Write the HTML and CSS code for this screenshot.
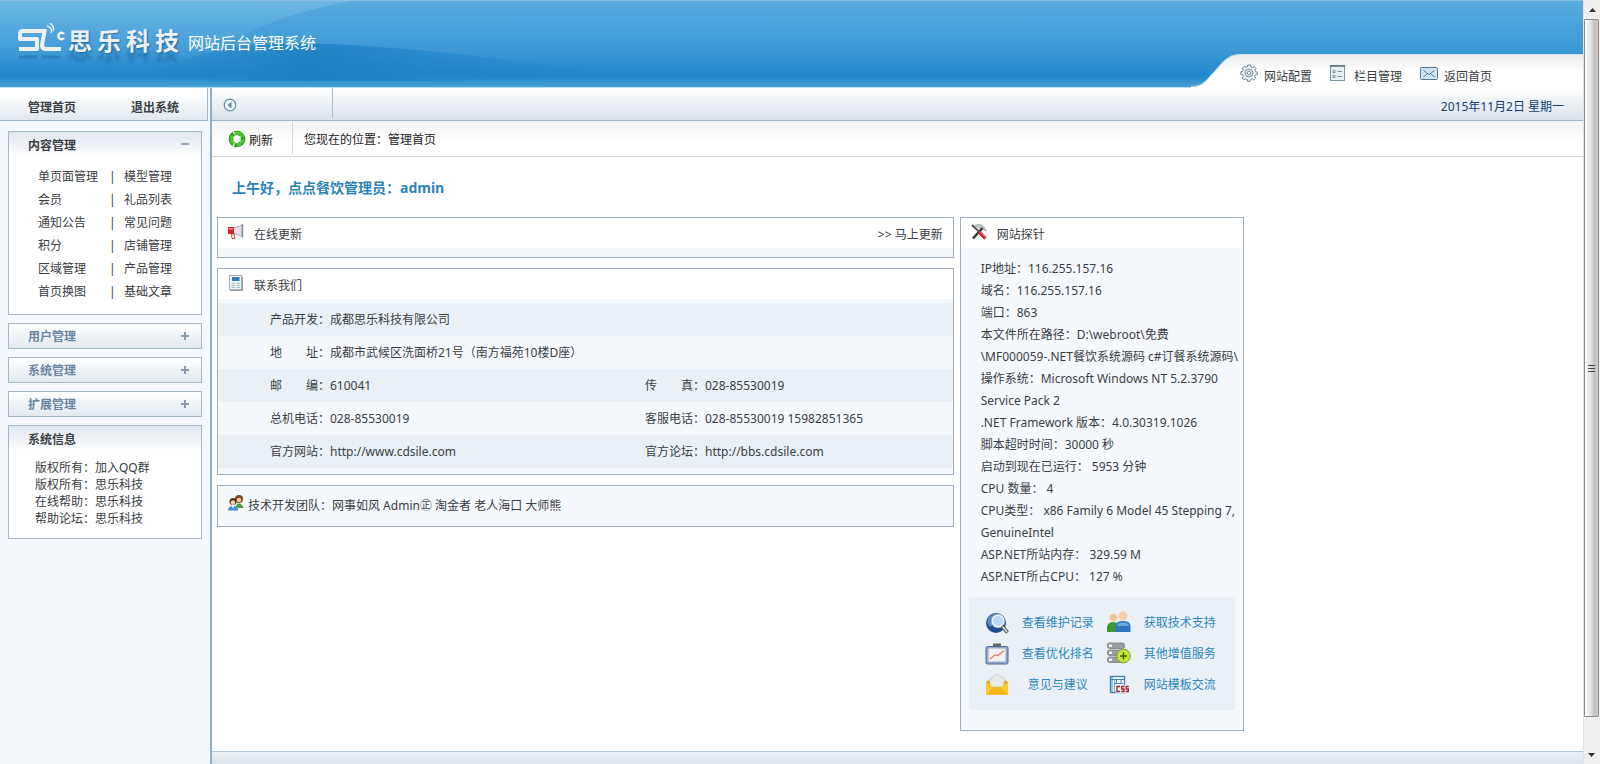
FILE: index.html
```html
<!DOCTYPE html>
<html lang="zh-CN">
<head>
<meta charset="utf-8">
<title>网站后台管理系统</title>
<link rel="stylesheet" href="styles.css">
</head>
<body>
<div class="window">
<div class="app">
  <header class="header">
    <svg class="swoosh" width="700" height="86" viewBox="0 0 700 86" aria-hidden="true">
      <defs>
        <linearGradient id="sw1" x1="0" y1="0" x2="0" y2="1"><stop offset="0" stop-color="#7cc0e8" stop-opacity=".6"/><stop offset=".7" stop-color="#5fb0e0" stop-opacity="0"/></linearGradient>
        <linearGradient id="sw2" x1="0" y1="0" x2="1" y2="0"><stop offset="0" stop-color="#1a80c4" stop-opacity="0"/><stop offset=".35" stop-color="#1a80c4" stop-opacity=".85"/><stop offset="1" stop-color="#1f86c8" stop-opacity="0"/></linearGradient>
      </defs>
      <path d="M0 0H350Q285 12 235 38Q170 75 120 86H0Z" fill="url(#sw1)"/>
      <path d="M130 80Q210 42 290 42Q420 43 640 78V80H130Z" fill="url(#sw2)"/>
    </svg>
    <div class="brand">
      <svg width="50" height="42" viewBox="0 0 50 42" aria-hidden="true">
        <path d="M2 34H20M25 34H43" stroke="#1b5f96" stroke-opacity=".35" stroke-width="3"/>
        <g fill="none" stroke="#eef1f4" stroke-width="4"><path d="M27 8H6Q3 8 3 11V16H20V26H2" stroke-linejoin="round"/><path d="M28 6L25 22Q25 26 29 26H44"/></g>
        <path d="M30 3Q36 5 34 10M33 0Q38 4 36 8" fill="none" stroke="#e6edf3" stroke-width="1.500"/>
        <path d="M47 11A3.200 3.200 0 1 0 47 15" fill="none" stroke="#eef1f4" stroke-width="2.500"/>
      </svg>
      <div class="brand-name"><span>思</span><span>乐</span><span>科</span><span>技</span></div>
      <div class="brand-sub">网站后台管理系统</div>
    </div>
    <div class="tab">
      <svg class="tab-edge" width="48" height="34" viewBox="0 0 48 34" aria-hidden="true">
        <defs><linearGradient id="te" x1="0" y1="0" x2="0" y2="1"><stop offset="0" stop-color="#ececec"/><stop offset=".5" stop-color="#fff"/></linearGradient></defs>
        <path d="M0 34V33Q9 33 15 27L33 7Q40 0 48 0V34Z" fill="url(#te)"/>
        <path d="M0 32.500Q9 32.500 15 26.500L33 6.500Q40 .5 48 .5" fill="none" stroke="#a9d0ea"/>
      </svg>
      <nav class="tab-links">
        <a href="#"><svg width="18" height="18" viewBox="0 0 18 18"><path d="M7.600 1H10.400L10.900 3L12.500 3.700L14.300 2.600L16 4.600L14.900 6.200L15.400 7.700L17.300 8.100V10.500L15.300 11L14.600 12.500L15.600 14.200L13.700 16L12.100 14.900L10.600 15.500L10.100 17.300H7.700L7.300 15.500L5.700 14.800L4 15.800L2.200 13.900L3.300 12.200L2.700 10.700L.8 10.200V7.800L2.700 7.300L3.400 5.700L2.400 4L4.200 2.400L5.900 3.400L7.200 2.900Z" fill="#eef3f5" stroke="#6f8892"/><circle cx="9" cy="9" r="4" fill="#dfe8ec" stroke="#7f969f"/><circle cx="9" cy="9" r="1.800" fill="#fff" stroke="#7f969f"/></svg>网站配置</a>
        <a href="#"><svg width="18" height="18" viewBox="0 0 18 18"><rect x=".5" y="1.500" width="14" height="15" fill="#e6eff1" stroke="#7f98a0"/><path d="M0 2H15" stroke="#5b7a84" stroke-width="1.600"/><path d="M3 6.500H5V8.500H3ZM3 11.500H5V13.500H3Z" fill="#fff" stroke="#7b959d"/><path d="M7.500 7.500H12M7.500 12.500H12" stroke="#7b959d"/></svg>栏目管理</a>
        <a href="#"><svg width="18" height="18" viewBox="0 0 18 18"><rect x=".5" y="3.500" width="17" height="12" rx="1" fill="#cfe4f2" stroke="#55788c"/><path d="M3.500 6.500L9 10.500L14.500 6.500M3.500 13L7 10M14.500 13L11 10" fill="none" stroke="#55788c"/></svg>返回首页</a>
      </nav>
    </div>
  </header>

  <div class="body">
    <aside class="side">
      <nav class="side-nav"><a href="#">管理首页</a><a href="#">退出系统</a></nav>
      <div class="side-boxes">
        <section class="box">
          <button class="box-head" type="button">内容管理<span class="minus"></span></button>
          <ul class="menu">
            <li><a href="#">单页面管理</a><i>|</i><a href="#">模型管理</a></li>
            <li><a href="#">会员</a><i>|</i><a href="#">礼品列表</a></li>
            <li><a href="#">通知公告</a><i>|</i><a href="#">常见问题</a></li>
            <li><a href="#">积分</a><i>|</i><a href="#">店铺管理</a></li>
            <li><a href="#">区域管理</a><i>|</i><a href="#">产品管理</a></li>
            <li><a href="#">首页换图</a><i>|</i><a href="#">基础文章</a></li>
          </ul>
        </section>
        <button class="box closed" type="button">用户管理<span class="plus"></span></button>
        <button class="box closed" type="button">系统管理<span class="plus"></span></button>
        <button class="box closed" type="button">扩展管理<span class="plus"></span></button>
        <section class="box">
          <h2 class="box-head">系统信息</h2>
          <ul class="info">
            <li>版权所有：加入QQ群</li><li>版权所有：思乐科技</li><li>在线帮助：思乐科技</li><li>帮助论坛：思乐科技</li>
          </ul>
        </section>
      </div>
    </aside>

    <main class="main">
      <div class="bar">
        <div class="bar-cell"><button type="button" class="plain" aria-label="收起"><svg width="14" height="14" viewBox="0 0 14 14"><circle cx="7" cy="7" r="5.800" fill="#f2f7fa" stroke="#5f8aa3" stroke-width="1.200"/><path d="M8.500 3.500V10.500L4.500 7Z" fill="#5f8aa3"/></svg></button></div>
        <time>2015年11月2日 星期一</time>
      </div>
      <div class="crumbs">
        <button type="button" class="plain refresh"><svg width="18" height="18" viewBox="0 0 18 18"><circle cx="9" cy="9" r="6" fill="none" stroke="#279a12" stroke-width="4.600" stroke-dasharray="11.600 1"/><circle cx="9" cy="9" r="6" fill="none" stroke="#4cc62e" stroke-width="3" stroke-dasharray="9.600 3"/><path d="M9 4.500L10.300 7.300L13.300 6.600L11.600 9.200L13.300 11.800L10.300 11.200L9 14L7.700 11.200L4.700 11.800L6.400 9.200L4.700 6.600L7.700 7.300Z" fill="#f4fff0"/></svg><span>刷新</span></button>
        <div class="where">您现在的位置：管理首页</div>
      </div>
      <div class="content">
        <h1 class="hello">上午好，点点餐饮管理员：admin</h1>
        <div class="cols">
          <div class="left">
            <section class="panel update">
              <h2 class="panel-head"><svg width="16" height="16" viewBox="0 0 16 16"><path d="M5 4.500L14 1V12.500L5 9Z" fill="#dfe3e6" stroke="#a5abb0"/><path d="M14.500 0V13.500" stroke="#8b9298" stroke-width="1.500"/><path d="M0 3H6V10H0Z" fill="#cf2630"/><path d="M1 4H5V5.500H1Z" fill="#f08a88"/><path d="M3 10H6L7 14.500H4Z" fill="#f3dede" stroke="#c55"/></svg>在线更新<a class="more" href="#">&gt;&gt; 马上更新</a></h2>
            </section>
            <section class="panel contact">
              <h2 class="panel-head"><svg width="16" height="16" viewBox="0 0 16 16"><rect x="1.500" y=".5" width="12" height="14" fill="#eef3f7" stroke="#9fb0bc"/><path d="M2 15.500H15M14.500 2V15" stroke="#9a9a9a"/><rect x="4" y="2" width="7.500" height="4" fill="#2f80b5"/><path d="M3.500 8.500H7M8.500 8.500H12M3.500 10.500H7M8.500 10.500H12M3.500 12.500H7M8.500 12.500H12" stroke="#a9b8c2"/></svg>联系我们</h2>
              <table>
                <tr><td>产品开发：成都思乐科技有限公司</td><td></td></tr>
                <tr><td>地　　址：成都市武候区洗面桥21号（南方福苑10楼D座）</td><td></td></tr>
                <tr><td>邮　　编：610041</td><td>传　　真：028-85530019</td></tr>
                <tr><td>总机电话：028-85530019</td><td>客服电话：028-85530019 15982851365</td></tr>
                <tr><td>官方网站：http://www.cdsile.com</td><td>官方论坛：http://bbs.cdsile.com</td></tr>
              </table>
            </section>
            <section class="panel team">
              <svg width="16" height="16" viewBox="0 0 16 16"><circle cx="11" cy="4" r="4" fill="#7c4a1c"/><circle cx="11" cy="5" r="2.300" fill="#f5c79a"/><path d="M7.500 13Q8 8.500 11 8.500T15.500 13Z" fill="#4c9a35"/><circle cx="5" cy="6.500" r="3.500" fill="#4b2c18"/><circle cx="5" cy="7.600" r="2.300" fill="#f7cf9f"/><path d="M0 15.500Q0 11 5 11T10 15.500Z" fill="#3f8fd2"/><path d="M4 11H6L5 14Z" fill="#fff"/></svg><span>技术开发团队：网事如风 Admin㊣ 淘金者 老人海口 大师熊</span>
            </section>
          </div>
          <section class="panel probe">
            <h2 class="panel-head"><svg width="16" height="16" viewBox="0 0 16 16"><path d="M4 1.500Q10-1 13 3L15.500 7L13 6L11 3.500L8.500 4Z" fill="#c5cdcb" stroke="#8c9894" stroke-width=".7"/><path d="M11.500 4L2 14.500" stroke="#34393c" stroke-width="2.600"/><path d="M1 1L9 8.500" stroke="#4c5558" stroke-width="2"/><path d="M8 8L14.500 14.500" stroke="#d2252f" stroke-width="3.200"/><path d="M9 8L14.500 13.500" stroke="#f07f80" stroke-width=".8"/></svg>网站探针</h2>
            <ul class="facts">
              <li>IP地址：116.255.157.16</li><li>域名：116.255.157.16</li><li>端口：863</li>
              <li>本文件所在路径：D:\webroot\免费<br>\MF000059-.NET餐饮系统源码 c#订餐系统源码\</li>
              <li>操作系统：Microsoft Windows NT 5.2.3790<br>Service Pack 2</li>
              <li>.NET Framework 版本：4.0.30319.1026</li><li>脚本超时时间：30000 秒</li><li>启动到现在已运行： 5953 分钟</li><li>CPU 数量： 4</li>
              <li>CPU类型： x86 Family 6 Model 45 Stepping 7,<br>GenuineIntel</li>
              <li>ASP.NET所站内存： 329.59 M</li><li>ASP.NET所占CPU： 127 %</li>
            </ul>
            <div class="links">
              <svg width="24" height="24" viewBox="0 0 24 24"><circle cx="11" cy="12" r="10" fill="#1f4f8f"/><path d="M3 7Q8 1 15 3Q13 7 9 9Q9 14 5 16Q1 12 3 7Z" fill="#4f8fd0"/><circle cx="13" cy="10" r="6" fill="#b9d9f2" stroke="#eef3f7" stroke-width="2"/><circle cx="13" cy="10" r="7" fill="none" stroke="#6f7f8d" stroke-width=".7"/><path d="M17 15L22.500 21.500" stroke="#555" stroke-width="3.500"/><path d="M17.500 15.500L22 21" stroke="#e6e6e6" stroke-width="1.400"/></svg>
              <a href="#">查看维护记录</a>
              <svg width="24" height="24" viewBox="0 0 24 24"><circle cx="6.500" cy="6.500" r="3.800" fill="#f2c49a"/><path d="M0 21V16Q1 11 6.500 11Q10 11 11 14V21Z" fill="#3a9b35"/><circle cx="16" cy="5" r="4.500" fill="#f6cda8"/><path d="M8.500 21V15Q9 10 16 10T23.500 15V21Z" fill="#2f76c0"/><path d="M10 15Q11 11.500 16 11.500T22 15Z" fill="#6faae0"/></svg>
              <a href="#">获取技术支持</a>
              <svg width="24" height="24" viewBox="0 0 24 24"><path d="M8 1.500H16V5H8Z" fill="#666"/><rect x="1" y="4.500" width="22" height="17.500" rx="1.500" fill="#8fa9cc" stroke="#52678c"/><rect x="3.500" y="6.500" width="17" height="13" fill="#f4f1f2"/><path d="M5 17L10 13L13 13.500L19 8.500" fill="none" stroke="#e27e68" stroke-width="1.200"/></svg>
              <a href="#">查看优化排名</a>
              <svg width="24" height="24" viewBox="0 0 24 24"><g fill="#9a9da0" stroke="#7d8083" stroke-width=".8"><rect x=".5" y="1" width="17" height="5.500" rx="2"/><rect x=".5" y="8" width="17" height="5.500" rx="2"/><rect x=".5" y="15" width="17" height="5.500" rx="2"/></g><path d="M2 2.500H5V5H2ZM2 9.500H5V12H2ZM2 16.500H5V19H2Z" fill="#eee"/><circle cx="16.500" cy="14" r="6.800" fill="#c4e43a" stroke="#7fa01c"/><path d="M16.500 10.500V17.500M13 14H20" stroke="#3d5a08" stroke-width="1.400"/></svg>
              <a href="#">其他增值服务</a>
              <svg width="24" height="24" viewBox="0 0 24 24"><path d="M1 9L11.500 2L23 9V21Q23 22 22 22H2Q1 22 1 21Z" fill="#e6a013"/><path d="M4 7L12 1L20 6L18 14H6Z" fill="#e7ebe7" stroke="#bcc3bd" stroke-width=".7"/><path d="M1 9L9 14.500H15L23 9V21Q23 22 22 22H2Q1 22 1 21Z" fill="#fac92f"/><path d="M1.500 21.500L9 14.500H15L22.500 21.500" fill="#f6b51c"/></svg>
              <a href="#">意见与建议</a>
              <svg width="24" height="24" viewBox="0 0 24 24"><rect x="3.500" y="3.500" width="14" height="16" fill="#fff" stroke="#3784b5" stroke-width="1.400"/><path d="M5 4V19M7.500 7V19" stroke="#7db4d8" stroke-width="1.500"/><path d="M3 6.500H18M9.500 10V6.500M14 10V6.500M7 10.500H16" stroke="#3784b5"/><rect x="9" y="12" width="13" height="8" fill="#f3eef0"/><path d="M13 13.500H10V18.500H13M17.500 13.500H14.800V16H17V18.500H14.300M21.800 13.500H19.200V16H21.300V18.500H18.700" fill="none" stroke="#9c1f2c" stroke-width="1.300"/></svg>
              <a href="#">网站模板交流</a>
            </div>
          </section>
        </div>
      </div>
      <footer class="foot"></footer>
    </main>
  </div>
</div>
<div class="scroll" aria-hidden="true">
  <svg width="16" height="19" viewBox="0 0 16 19"><path d="M5 12L8.500 8L12 12Z" fill="#333"/></svg>
  <div class="thumb"><i></i><i></i><i></i></div>
  <svg width="16" height="47" viewBox="0 0 16 47"><path d="M4 36L7.500 40L11 36Z" fill="#333"/></svg>
</div>
</div>
</body>
</html>
```
FILE: styles.css
```css
* { box-sizing: border-box; }
body, h1, h2, ul { margin: 0; padding: 0; }
body { font: 12px/22px "Noto Sans", "Noto Sans CJK SC", sans-serif; color: #3a3d42; background: #fff; }
a { color: inherit; text-decoration: none; }
ul { list-style: none; }
svg { display: block; flex: none; }
button { font: inherit; color: inherit; cursor: pointer; text-align: left; }
h2 { font-size: 12px; font-weight: 400; }

.window { display: flex; min-height: 100vh; }
.app { flex: 1; min-width: 0; display: flex; flex-direction: column; }

.header { position: relative; display: flex; justify-content: space-between; height: 88px; border-top: 1px solid #8bc0e2; border-bottom: 1px solid #b9daee; background: linear-gradient(#5aaadd, #4ba2d9 28%, #3f9ad4 55%, #258bcc 82%, #2389cb 88%, #4a9ed5); }
.swoosh { position: absolute; left: 0; top: 0; }
.brand { position: relative; display: flex; padding: 22px 0 0 17px; color: #eef1f4; }
.brand-name { display: flex; gap: 5px; margin: 3px 0 0 1px; font: 700 24px/28px "Noto Sans CJK SC", sans-serif; text-shadow: 1px 1px 1px #1f6ea8, 0 9px 3px rgba(20, 75, 125, .35); }
.brand-sub { margin: 8px 0 0 9px; font-size: 16px; line-height: 24px; color: #fff; }
.tab { position: relative; display: flex; align-self: flex-end; margin-bottom: -1px; }
.tab-edge { position: relative; z-index: 1; }
.tab-links { display: flex; gap: 18px; width: 344px; height: 34px; padding: 9px 0 0 1px; background: linear-gradient(#ececec, #fff 50%); border-top: 1px solid #cfe2ef; }
.tab-links a { display: flex; gap: 6px; line-height: 26px; }

.body { flex: 1; display: flex; }
.side { width: 212px; border-right: 2px solid #8bafc6; background: #f5f9fe; }
.side-nav { display: flex; gap: 55px; height: 33px; padding-left: 28px; margin-right: 2px; font-weight: 700; line-height: 39px; border-right: 1px solid #9fb9cc; border-bottom: 1px solid #9fb9cc; background: linear-gradient(#fff 20%, #e0e8ee); }
.side-boxes { display: flex; flex-direction: column; gap: 8px; padding: 10px 8px 0; }
.box { border: 1px solid #a3b9c9; background: #fff; }
.box-head { display: flex; justify-content: space-between; align-items: center; width: 100%; height: 28px; padding: 0 12px 0 19px; border: 0; font-weight: 700; background: linear-gradient(#dfe7ef, #fff 90%); }
.closed { display: flex; justify-content: space-between; height: 26px; padding: 2px 12px 0 19px; font-weight: 700; color: #6884a2; background: linear-gradient(#fff, #e1e9ef); }
.minus, .plus { width: 8px; height: 8px; background: linear-gradient(#9aa9b9, #9aa9b9) center / 8px 2px no-repeat; }
.box-head .minus { margin-bottom: 4px; }
.plus { margin-top: 6px; background: linear-gradient(#8d9bb0, #8d9bb0) center / 8px 2px no-repeat, linear-gradient(#8d9bb0, #8d9bb0) center / 2px 8px no-repeat; }
.menu { padding: 5px 0 11px 29px; }
.menu li { display: grid; grid-template-columns: 71px 15px 1fr; line-height: 23px; }
.menu i { font-style: normal; }
.info { padding: 5px 0 11px 26px; line-height: 17px; }
.info, .contact table, .facts, .team { font-family: "Noto Sans", "Noto Sans CJK TC", sans-serif; }

.main { flex: 1; min-width: 0; display: flex; flex-direction: column; }
.bar { display: flex; justify-content: space-between; height: 33px; padding-right: 19px; border-bottom: 1px solid #9fb9cc; background: linear-gradient(#fff, #d9e2ea); }
.bar-cell { display: flex; align-items: center; width: 121px; margin-bottom: 2px; padding: 4px 0 0 11px; border-right: 1px solid #a9bccb; }
.bar time { line-height: 37px; color: #123f70; }
.plain { padding: 0; border: 0; background: none; }
.crumbs { display: flex; height: 36px; border-bottom: 1px solid #d3d9de; color: #222; background: linear-gradient(#f3f3f3, #fff 60%); }
.refresh { display: flex; align-items: center; gap: 3px; width: 81px; margin: 1px 0 2px; padding: 2px 0 0 16px; border-right: 1px solid #d0d5da; }
.refresh span { padding-top: 3px; }
.where { padding-left: 11px; line-height: 38px; }
.content { flex: 1; padding: 19px 0 20px 5px; }
.hello { padding-left: 15px; font-size: 14px; line-height: 24px; color: #2a84ba; }
.cols { display: grid; grid-template-columns: 221fr 284px 100fr; gap: 6px; align-items: start; margin-top: 17px; }
.left { display: flex; flex-direction: column; gap: 10px; }
.panel { border: 1px solid #9dadbb; background: #f5f9fe; }
.panel-head { display: flex; gap: 10px; height: 30px; padding: 6px 10px 0; background: #fff; }
.more { margin-left: auto; }
.update { padding-bottom: 9px; }
.contact table { width: 100%; margin: 4px 0 6px; border-collapse: collapse; table-layout: fixed; }
.contact tr:nth-child(odd) { background: #e9f1f7; }
.contact td { height: 33px; padding: 0; }
.contact td:first-child { width: 427px; padding-left: 52px; }
.team { display: flex; gap: 4px; padding: 9px 0 9px 10px; }
.facts { padding: 10px 0 9px 20px; white-space: nowrap; }
.links { display: grid; grid-template-columns: 24px 72px 24px 72px; column-gap: 13px; align-items: center; margin: 0 8px 20px; padding: 10px 0 10px 16px; grid-auto-rows: 31px; background: #e9f1f7; color: #2c86bd; text-align: center; }
.foot { height: 13px; border-top: 1px solid #b5cbd9; background: linear-gradient(#eaf0f4, #dce5eb); }

.scroll { width: 17px; display: flex; flex-direction: column; border-left: 1px solid #e3e3e3; background: #efefef; }
.thumb { flex: 1; display: flex; flex-direction: column; justify-content: center; align-items: center; gap: 2px; margin-right: 1px; border: 1px solid #8d8d8d; border-radius: 1px; background: linear-gradient(90deg, #fafafa, #e6e6e6 40%, #c0c0c0 75%, #cfcfcf); }
.thumb i { width: 7px; height: 1px; background: #444; }
```
